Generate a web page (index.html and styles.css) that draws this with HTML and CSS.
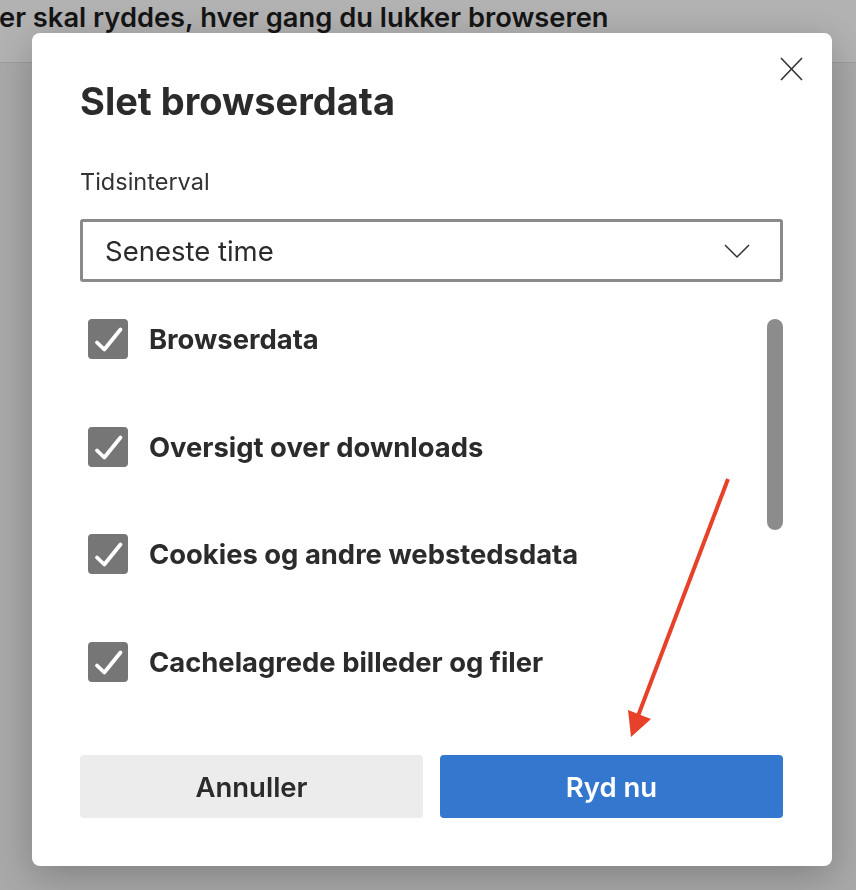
FILE: index.html
```html
<!DOCTYPE html>
<html>
    <head>
        <title>Slet browserdata</title>
        <link rel="stylesheet" href="styles.css">
    </head>
    <body>
        <div class="topBar">er skal ryddes, hver gang du lukker browseren</div>
        <div class="pageBody"></div>

        <div class="overlay">
            <div class="dialog">
                <button class="closeButton" aria-label="Luk">
                    <svg width="23" height="24" viewBox="0 0 23 24"><path d="M1 1 L22 23 M22 1 L1 23" stroke="#333" stroke-width="1.6" fill="none"/></svg>
                </button>

                <h1>Slet browserdata</h1>

                <div class="fieldLabel">Tidsinterval</div>
                <div class="select">
                    <span>Seneste time</span>
                    <svg width="26" height="16" viewBox="0 0 26 16"><path d="M1 2 L13 14 L25 2" stroke="#333" stroke-width="1.5" fill="none"/></svg>
                </div>

                <div class="listArea">
                    <div class="options">
                        <label class="option">
                            <span class="checkbox"><svg width="40" height="40" viewBox="0 0 40 40"><path d="M9 23.5 L16.3 30.5 L32.5 10.5" stroke="#fff" stroke-width="3.8" fill="none" stroke-linecap="round" stroke-linejoin="round"/></svg></span>
                            Browserdata
                        </label>
                        <label class="option">
                            <span class="checkbox"><svg width="40" height="40" viewBox="0 0 40 40"><path d="M9 23.5 L16.3 30.5 L32.5 10.5" stroke="#fff" stroke-width="3.8" fill="none" stroke-linecap="round" stroke-linejoin="round"/></svg></span>
                            Oversigt over downloads
                        </label>
                        <label class="option">
                            <span class="checkbox"><svg width="40" height="40" viewBox="0 0 40 40"><path d="M9 23.5 L16.3 30.5 L32.5 10.5" stroke="#fff" stroke-width="3.8" fill="none" stroke-linecap="round" stroke-linejoin="round"/></svg></span>
                            Cookies og andre webstedsdata
                        </label>
                        <label class="option">
                            <span class="checkbox"><svg width="40" height="40" viewBox="0 0 40 40"><path d="M9 23.5 L16.3 30.5 L32.5 10.5" stroke="#fff" stroke-width="3.8" fill="none" stroke-linecap="round" stroke-linejoin="round"/></svg></span>
                            Cachelagrede billeder og filer
                        </label>
                    </div>
                    <div class="scrollThumb"></div>
                </div>

                <div class="buttons">
                    <button class="btn btnCancel">Annuller</button>
                    <button class="btn btnPrimary">Ryd nu</button>
                </div>

                <!-- red annotation arrow -->
                <svg class="arrow" width="800" height="833" viewBox="0 0 800 833">
                    <line x1="696" y1="446" x2="606" y2="683" stroke="#e8412a" stroke-width="4"/>
                    <polygon points="596,677 619,686 599,704" fill="#e8412a"/>
                </svg>
            </div>
        </div>
    </body>
</html>
```

FILE: styles.css
```css
body{
    margin: 0;
    background: #f2f2f2;
    font-family: Inter, "Noto Sans", sans-serif;
    color: #2b2b2b;
    overflow: hidden;
}

.topBar{
    background: #ffffff;
    height: 63px;
    border-bottom: 1px solid #e2e2e2;
    box-sizing: border-box;
    padding-top: 1px;
    margin-left: -1px;
    font-size: 27.3px;
    line-height: 34px;
    font-weight: 600;
    color: #1e1e1e;
    white-space: nowrap;
}

.pageBody{
    height: 827px;
}

.overlay{
    position: fixed;
    top: 0px;
    left: 0px;
    right: 0px;
    bottom: 0px;
    background: rgba(0, 0, 0, 0.3);
    padding: 33px 0 0 32px;
}

.dialog{
    position: relative;
    width: 800px;
    height: 833px;
    box-sizing: border-box;
    padding: 45px 49px 0 48px;
    background: #ffffff;
    border-radius: 8px;
    box-shadow: 0 10px 40px rgba(0, 0, 0, 0.25);
}

.closeButton{
    position: absolute;
    top: 24px;
    right: 29px;
    padding: 0;
    border: 0;
    background: none;
    width: 23px;
    height: 24px;
}
.closeButton svg{
    display: block;
}

h1{
    margin: 0;
    font-size: 38px;
    line-height: 46px;
    font-weight: 700;
    color: #2b2b2b;
}

.fieldLabel{
    margin-top: 43px;
    font-size: 23.5px;
    line-height: 29px;
    color: #333333;
}

.select{
    margin-top: 23px;
    height: 63px;
    box-sizing: border-box;
    border: 3px solid #8a8a8a;
    border-radius: 3px;
    display: flex;
    align-items: center;
    justify-content: space-between;
    padding: 0 30px 0 22px;
    font-size: 27.5px;
    color: #2b2b2b;
}

.listArea{
    margin-top: 37px;
    height: 400px;
    display: flex;
}

.options{
    flex: 1;
    display: flex;
    flex-direction: column;
    gap: 67.5px;
    padding-left: 8px;
}

.option{
    display: flex;
    align-items: center;
    gap: 21px;
    height: 40px;
    font-size: 27.4px;
    font-weight: 700;
    color: #2b2b2b;
}

.checkbox{
    width: 40px;
    height: 40px;
    border-radius: 4px;
    background: #767676;
}
.checkbox svg{
    display: block;
}

.scrollThumb{
    width: 16px;
    height: 211px;
    border-radius: 8px;
    background: #8c8c8c;
}

.buttons{
    margin-top: 36px;
    display: grid;
    grid-template-columns: 1fr 1fr;
    grid-column-gap: 17px;
}

.btn{
    height: 63px;
    border: 0;
    border-radius: 4px;
    font-family: Inter, "Noto Sans", sans-serif;
    font-size: 27.5px;
    font-weight: 600;
}
.btnCancel{
    background: #ececec;
    color: #2b2b2b;
}
.btnPrimary{
    background: #3477cf;
    color: #ffffff;
}

.arrow{
    position: absolute;
    left: 0px;
    top: 0px;
    pointer-events: none;
}
```
